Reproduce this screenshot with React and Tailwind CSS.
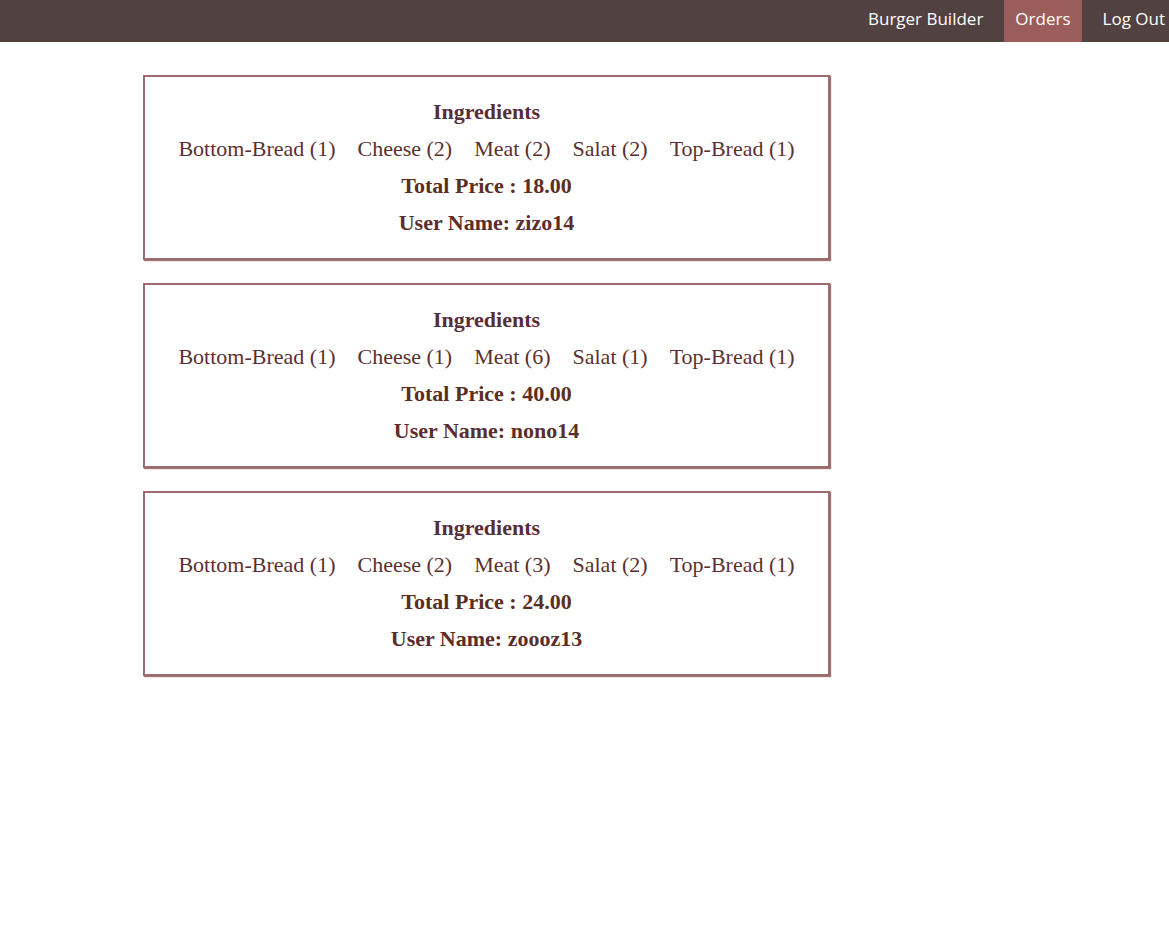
const orders = [
  {
    id: 1,
    ingredients: [
      ['Bottom-Bread', 1],
      ['Cheese', 2],
      ['Meat', 2],
      ['Salat', 2],
      ['Top-Bread', 1],
    ],
    price: '18.00',
    user: 'zizo14',
  },
  {
    id: 2,
    ingredients: [
      ['Bottom-Bread', 1],
      ['Cheese', 1],
      ['Meat', 6],
      ['Salat', 1],
      ['Top-Bread', 1],
    ],
    price: '40.00',
    user: 'nono14',
  },
  {
    id: 3,
    ingredients: [
      ['Bottom-Bread', 1],
      ['Cheese', 2],
      ['Meat', 3],
      ['Salat', 2],
      ['Top-Bread', 1],
    ],
    price: '24.00',
    user: 'zoooz13',
  },
];

function NavBar() {
  return (
    <header className="h-[42px] bg-[#524141] overflow-hidden flex justify-end font-['Open_Sans',sans-serif] text-[17px] text-white">
      <nav className="flex items-stretch gap-[10px] -mr-[7px]">
        <a className="px-[11px] pb-[5px] flex items-center">Burger Builder</a>
        <a className="px-[11px] pb-[5px] flex items-center bg-[#9b5c5c]">Orders</a>
        <a className="px-[11px] pb-[5px] flex items-center">Log Out</a>
      </nav>
    </header>
  );
}

function OrderCard({ order }) {
  return (
    <div className="w-[687px] mb-[23px] border-2 border-[#9c6b6b] shadow-[1px_1px_1px_#a37474] pt-4 pb-[17px] text-center font-['Liberation_Serif',serif] text-[22px] leading-[37px]">
      <div className="font-bold text-[#572e3a]">Ingredients</div>
      <div className="flex justify-center gap-[22px] text-[#5c3030]">
        {order.ingredients.map(([name, count]) => (
          <span key={name}>
            {name} ({count})
          </span>
        ))}
      </div>
      <div className="font-bold text-[#5c2e22]">Total Price : {order.price}</div>
      <div className="font-bold text-[#5b2e2c]">User Name: {order.user}</div>
    </div>
  );
}

export default function App() {
  return (
    <div className="min-h-screen bg-white">
      <NavBar />
      <main className="pl-[143px] pt-[33px]">
        {orders.map((order) => (
          <OrderCard key={order.id} order={order} />
        ))}
      </main>
    </div>
  );
}
